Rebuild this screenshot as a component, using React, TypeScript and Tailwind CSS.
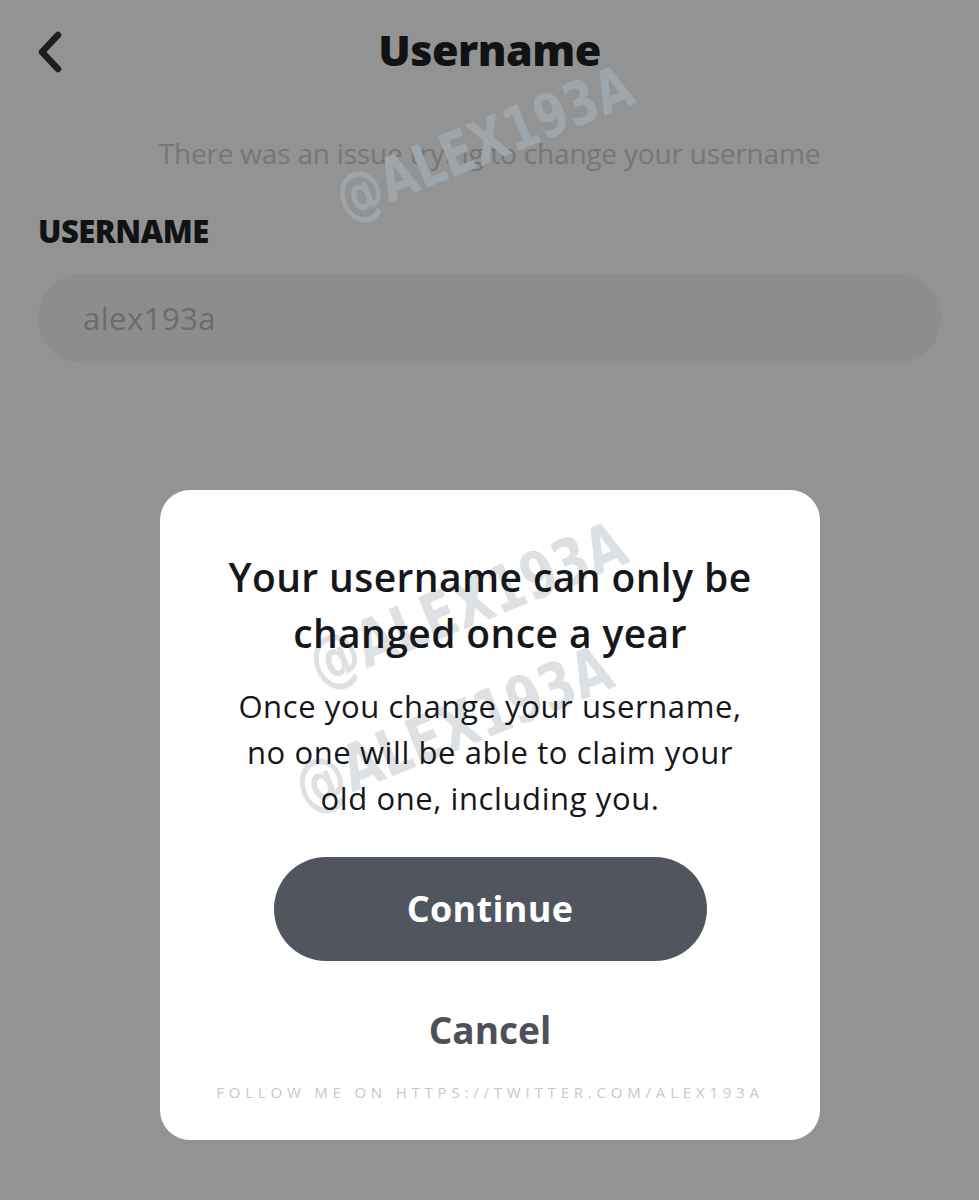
import React from "react";

const wm = { fontFamily: "'DejaVu Sans', 'Liberation Sans', sans-serif" } as React.CSSProperties;

export default function App() {
  const font = { fontFamily: "'Open Sans', 'Noto Sans', sans-serif" } as React.CSSProperties;
  return (
    <div className="relative w-[979px] h-[1200px] overflow-hidden bg-[#939393]" style={font}>
      {/* Header */}
      <div className="relative flex h-[100px] items-center justify-center">
        <svg className="absolute left-[36px] top-[30px]" width="30" height="44" viewBox="0 0 30 44" fill="none">
          <path d="M22 5 L6 22 L22 39" stroke="#1c1d20" strokeWidth="6.5" strokeLinecap="round" strokeLinejoin="round" />
        </svg>
        <h1 className="mt-[-2px] text-[43px] font-extrabold leading-none tracking-[-0.5px] text-[#111214]">Username</h1>
      </div>
      <p className="mt-[35px] text-center text-[28px] leading-[36px] tracking-[-0.2px] text-[#767778]">There was an issue trying to change your username</p>
      <div className="mt-[42px] px-[38px]">
        <div className="text-[31px] font-extrabold leading-[36px] tracking-[-0.5px] text-[#111214]">USERNAME</div>
        <div className="mt-[25px] flex h-[89px] items-center rounded-full bg-[#8d8d8f] pl-[45px] text-[31px] tracking-[0.5px] text-[#6b6c6e]">alex193a</div>
      </div>

      {/* Background watermark */}
      <div className="pointer-events-none absolute left-[282px] top-[112px] -rotate-[22deg] scale-x-[0.78] text-[60px] font-bold leading-none text-[#9ea5ab]" style={wm}>@ALEX193A</div>

      {/* Modal */}
      <div className="absolute left-[160px] top-[490px] h-[650px] w-[660px] overflow-hidden rounded-[30px] bg-white">
        <div className="pointer-events-none absolute left-[92px] top-[82px] -rotate-[22deg] scale-x-[0.78] text-[64px] font-bold leading-none text-[#dde1e4]" style={wm}>@ALEX193A</div>
        <div className="pointer-events-none absolute left-[78px] top-[206px] -rotate-[22deg] scale-x-[0.78] text-[64px] font-bold leading-none text-[#dde1e4]" style={wm}>@ALEX193A</div>
        <div className="relative flex flex-col items-center pt-[59px]">
          <h2 className="text-center text-[39px] font-semibold leading-[56px] tracking-[0.4px] text-[#16171a]">
            Your username can only be
            <br />
            changed once a year
          </h2>
          <p className="mt-[22px] text-center text-[31px] leading-[46px] tracking-[0.6px] text-[#16171a]">
            Once you change your username,
            <br />
            no one will be able to claim your
            <br />
            old one, including you.
          </p>
          <button className="mt-[36px] flex h-[104px] w-[433px] items-center justify-center rounded-full bg-[#51565e] text-[36px] font-bold tracking-[0.3px] text-white">Continue</button>
          <div className="mt-[47px] text-[37px] font-bold leading-[44px] text-[#4c5159]">Cancel</div>
          <div className="mt-[31px] text-[15px] leading-[18px] tracking-[4.8px] text-[#c3c9cf]">FOLLOW ME ON HTTPS://TWITTER.COM/ALEX193A</div>
        </div>
      </div>
    </div>
  );
}
